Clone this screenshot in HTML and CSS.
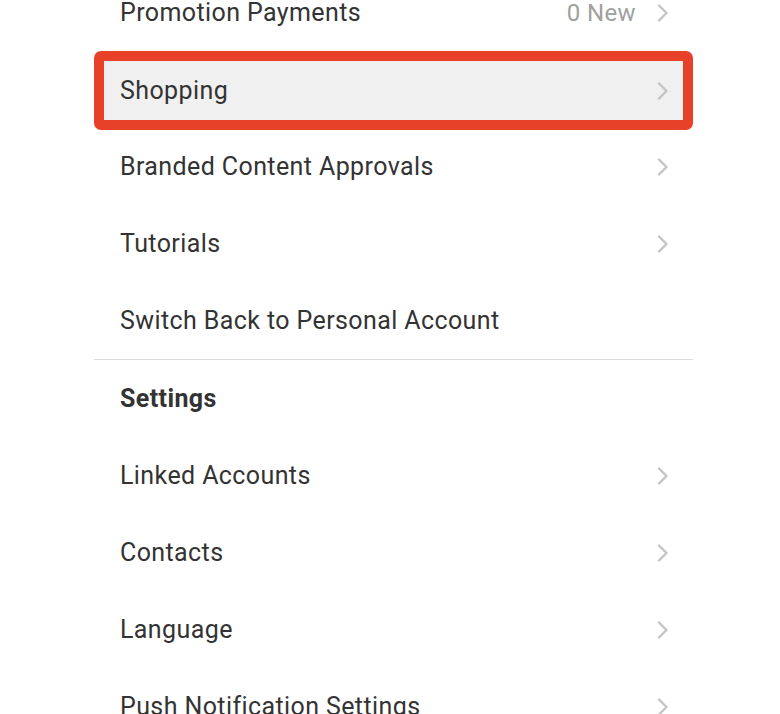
FILE: index.html
```html
<!DOCTYPE html>
<html>
<head>
<meta charset="utf-8">
<link rel="stylesheet" href="styles.css">
</head>
<body>
<div class="list">
  <div class="row"><span class="label">Promotion Payments</span><span class="meta">0 New</span><span class="chev"><svg width="12" height="18" viewBox="0 0 12 18"><path d="M2 1.5 L9.5 9 L2 16.5" fill="none" stroke="#c4c4c4" stroke-width="2.4" stroke-linecap="round" stroke-linejoin="round"/></svg></span></div>
  <div class="row hl"><span class="label">Shopping</span><span class="chev"><svg width="12" height="18" viewBox="0 0 12 18"><path d="M2 1.5 L9.5 9 L2 16.5" fill="none" stroke="#c4c4c4" stroke-width="2.4" stroke-linecap="round" stroke-linejoin="round"/></svg></span></div>
  <div class="row"><span class="label">Branded Content Approvals</span><span class="chev"><svg width="12" height="18" viewBox="0 0 12 18"><path d="M2 1.5 L9.5 9 L2 16.5" fill="none" stroke="#c4c4c4" stroke-width="2.4" stroke-linecap="round" stroke-linejoin="round"/></svg></span></div>
  <div class="row"><span class="label">Tutorials</span><span class="chev"><svg width="12" height="18" viewBox="0 0 12 18"><path d="M2 1.5 L9.5 9 L2 16.5" fill="none" stroke="#c4c4c4" stroke-width="2.4" stroke-linecap="round" stroke-linejoin="round"/></svg></span></div>
  <div class="row"><span class="label">Switch Back to Personal Account</span></div>
  <div class="divider"></div>
  <div class="row"><span class="label bold">Settings</span></div>
  <div class="row"><span class="label">Linked Accounts</span><span class="chev"><svg width="12" height="18" viewBox="0 0 12 18"><path d="M2 1.5 L9.5 9 L2 16.5" fill="none" stroke="#c4c4c4" stroke-width="2.4" stroke-linecap="round" stroke-linejoin="round"/></svg></span></div>
  <div class="row"><span class="label">Contacts</span><span class="chev"><svg width="12" height="18" viewBox="0 0 12 18"><path d="M2 1.5 L9.5 9 L2 16.5" fill="none" stroke="#c4c4c4" stroke-width="2.4" stroke-linecap="round" stroke-linejoin="round"/></svg></span></div>
  <div class="row"><span class="label">Language</span><span class="chev"><svg width="12" height="18" viewBox="0 0 12 18"><path d="M2 1.5 L9.5 9 L2 16.5" fill="none" stroke="#c4c4c4" stroke-width="2.4" stroke-linecap="round" stroke-linejoin="round"/></svg></span></div>
  <div class="row"><span class="label">Push Notification Settings</span><span class="chev"><svg width="12" height="18" viewBox="0 0 12 18"><path d="M2 1.5 L9.5 9 L2 16.5" fill="none" stroke="#c4c4c4" stroke-width="2.4" stroke-linecap="round" stroke-linejoin="round"/></svg></span></div>
</div>
</body>
</html>
```
FILE: styles.css
```css
html, body {
  margin: 0;
  padding: 0;
  background: #ffffff;
  overflow: hidden;
}
body {
  font-family: Roboto, "Liberation Sans", sans-serif;
  color: #333333;
}
.list {
  width: 599px;
  margin: -26px 0 0 94px;
  display: flex;
  flex-direction: column;
}
.row {
  height: 77px;
  box-sizing: border-box;
  display: flex;
  align-items: center;
  padding: 0 24px 0 26px;
  font-size: 25px;
  letter-spacing: 0.4px;
}
.label {
  flex: 1;
}
.bold {
  font-weight: 700;
}
.meta {
  color: #a0a0a0;
  margin-right: 21px;
  font-size: 24px;
}
.chev {
  display: flex;
  align-items: center;
}
.hl {
  height: 79px;
  margin: 0 0 -2px 0;
  border: 10px solid #e8412a;
  border-radius: 7px;
  background: #f0f0f0;
  padding: 0 14px 0 16px;
}
.divider {
  height: 1px;
  background: #dbdbdb;
}
```
